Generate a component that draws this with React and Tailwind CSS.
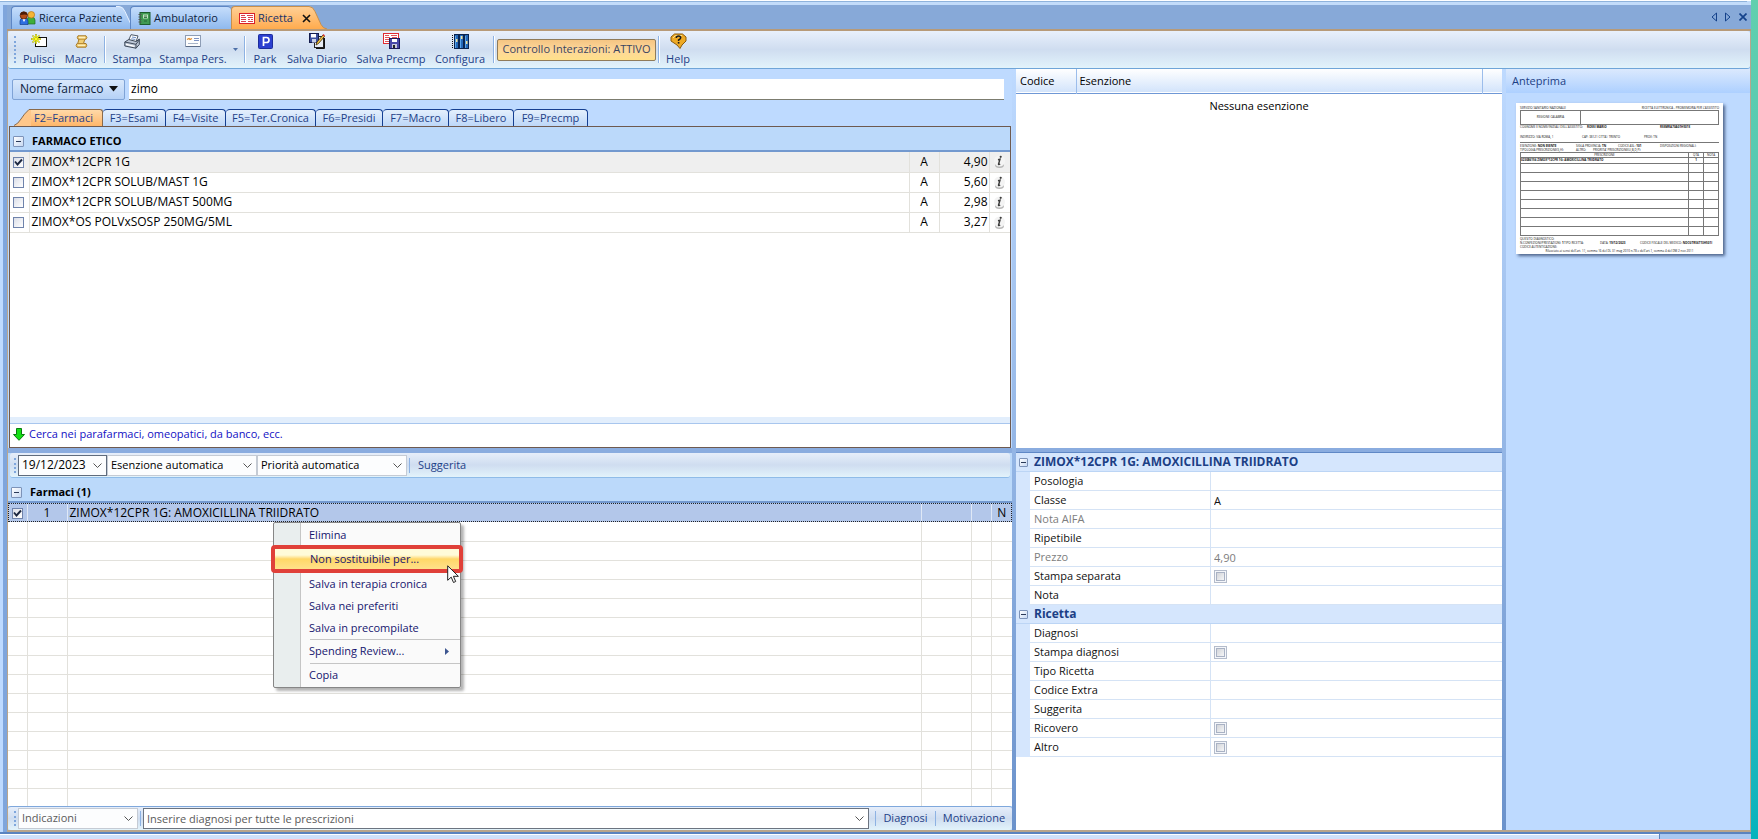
import { useState } from 'react'
import clsx from 'clsx'

const farmaci = [
  { name: 'ZIMOX*12CPR 1G', classe: 'A', price: '4,90', checked: true },
  { name: 'ZIMOX*12CPR SOLUB/MAST 1G', classe: 'A', price: '5,60' },
  { name: 'ZIMOX*12CPR SOLUB/MAST 500MG', classe: 'A', price: '2,98' },
  { name: 'ZIMOX*OS POLVxSOSP 250MG/5ML', classe: 'A', price: '3,27' }
]

const searchTabs = [
  { label: 'F3=Esami', width: 'w-[63px]' },
  { label: 'F4=Visite', width: 'w-[60px]' },
  { label: 'F5=Ter.Cronica', width: 'w-[90px]' },
  { label: 'F6=Presidi', width: 'w-[67px]' },
  { label: 'F7=Macro', width: 'w-[66px]' },
  { label: 'F8=Libero', width: 'w-[65px]' },
  { label: 'F9=Precmp', width: 'w-[74px]' }
]

const propertyGroups = [
  {
    title: 'ZIMOX*12CPR 1G: AMOXICILLINA TRIIDRATO',
    rows: [
      { label: 'Posologia' },
      { label: 'Classe', value: 'A' },
      { label: 'Nota AIFA', disabled: true },
      { label: 'Ripetibile' },
      { label: 'Prezzo', value: '4,90', disabled: true },
      { label: 'Stampa separata', check: true },
      { label: 'Nota' }
    ]
  },
  {
    title: 'Ricetta',
    rows: [
      { label: 'Diagnosi' },
      { label: 'Stampa diagnosi', check: true },
      { label: 'Tipo Ricetta' },
      { label: 'Codice Extra' },
      { label: 'Suggerita' },
      { label: 'Ricovero', check: true },
      { label: 'Altro', check: true }
    ]
  }
]

/* ---------- icons ---------- */

const UsersIcon = () => (
  <svg width="17" height="14" viewBox="0 0 17 14" className="shrink-0">
    <path d="M8 13V9q0-3 4-3t4 3v4z" fill="#3fae3a" stroke="#1d6b26" strokeWidth=".7" />
    <circle cx="12.300" cy="3.800" r="3.300" fill="#f5b535" stroke="#b87412" strokeWidth=".7" />
    <path d="M1 13.500V10q0-3 4-3t4 3v3.500z" fill="#2f6fe0" stroke="#153f91" strokeWidth=".7" />
    <circle cx="4.800" cy="4.500" r="3.700" fill="#b34d1a" stroke="#4f1d06" strokeWidth=".7" />
    <path d="M1.200 4Q1.600.6 4.800.7 8 .8 8.500 4 6 2.800 1.200 4z" fill="#4b1c08" />
    <path d="M3.500 8.200L5 11l1.500-2.800z" fill="#fff" />
  </svg>
)

const BookIcon = () => (
  <svg width="13" height="13" viewBox="0 0 13 13" className="shrink-0">
    <rect x="2" y=".5" width="10" height="12" fill="#3f9a52" stroke="#1c5c2e" />
    <rect x="5" y="2.500" width="5" height="4" fill="#bfe6c1" />
    <path d="M6 4h3M6 5.500h3M6 9h3" stroke="#1c5c2e" strokeWidth=".8" />
    <path d="M.5 2.500h3M.5 5h3M.5 7.500h3M.5 10h3" stroke="#555" />
  </svg>
)

const FormIcon = () => (
  <svg width="16" height="11" viewBox="0 0 16 11" className="shrink-0">
    <rect x=".5" y=".5" width="15" height="10" fill="#fff" stroke="#d8202a" />
    <path d="M2 2.500h4M8 2.500h6M2 4.500h5M9 4.500h5M2 6.500h5M9 6.500h2M12 6.500h2M2 8.500h5M9 8.500h5" stroke="#d9404a" />
  </svg>
)

const NewIcon = () => (
  <svg width="17" height="15" viewBox="0 0 17 15">
    <rect x="4.500" y="3.500" width="11" height="9" fill="#fff" stroke="#111" />
    <path d="M5 0v10M0 5h10M1.500 1.500l7 7M8.500 1.500l-7 7" stroke="#a8a800" strokeWidth="1.500" />
    <path d="M5 1v8M1 5h8M2 2l6 6M8 2L2 8" stroke="#ffff20" strokeWidth=".9" />
  </svg>
)

const ScrollIcon = () => (
  <svg width="13" height="13" viewBox="0 0 13 13">
    <path d="M3 .8h8q1.800 1.700 0 3.400H9.800L8.500 8.500H11q1.500 1.800 0 3.700H2Q.2 10.400 2 8.500h.7l1.300-4.300H3Q1.600 2.500 3 .8z" fill="#f1cd72" stroke="#a87a26" />
    <path d="M4 4.200h5.500M3 8.500h5.500" stroke="#b98a34" />
    <path d="M4 2.500h6M3 10.300h7" stroke="#fdeebc" strokeWidth="1.300" />
  </svg>
)

const PrinterIcon = () => (
  <svg width="17" height="15" viewBox="0 0 17 15">
    <path d="M4.500 6.500L7 .7l7 1.200-2 6z" fill="#fff" stroke="#4e5968" />
    <path d="M8 3l4 .7M7.300 4.800l4 .7" stroke="#6f8fc4" />
    <path d="M.8 8l4-2.500 7.500 2 3-2.500v5.500L12 14.200.8 12z" fill="#bcc6d6" stroke="#3f4a5a" />
    <path d="M.8 8l11.200 2.300 3.300-4.500M12 10.300v4" fill="none" stroke="#3f4a5a" />
    <path d="M2 10.300l8.500 2" stroke="#fff" strokeWidth="1.300" />
  </svg>
)

const CardIcon = () => (
  <svg width="16" height="13" viewBox="0 0 16 13">
    <rect x=".5" y=".5" width="15" height="11" fill="#fdfdfd" stroke="#8e9db5" />
    <path d="M2 4.500l2-1 1 1 2-1" fill="none" stroke="#e08b2a" strokeWidth="1.200" />
    <path d="M9 3.500h5M9 5.500h5" stroke="#7d93c4" />
    <path d="M3 8.500h10" stroke="#a8b4c8" />
    <path d="M1 11.500h14" stroke="#5b6b86" />
  </svg>
)

const ParkIcon = () => (
  <svg width="15" height="15" viewBox="0 0 15 15">
    <rect x=".5" y=".5" width="14" height="14" rx="1" fill="#2b3fd0" stroke="#1c2c9c" />
    <path d="M5.500 12V3.500h3a2.200 2.200 0 010 5h-3" fill="none" stroke="#fff" strokeWidth="1.700" />
  </svg>
)

const DiaryIcon = () => (
  <svg width="16" height="16" viewBox="0 0 16 16">
    <rect x="5.500" y="3.500" width="9" height="11" fill="#e8ecf4" stroke="#222" />
    <rect x=".5" y=".5" width="9" height="9" fill="#3b4f9e" stroke="#151d4d" />
    <rect x="2" y="1" width="5" height="3.500" fill="#fff" />
    <rect x="3" y="6" width="4" height="3.500" fill="#c9d0e6" />
    <path d="M7 12l1-3 6-7 1.500 1.500-6 7z" fill="#f3c443" stroke="#3a2a0a" strokeWidth=".8" />
    <path d="M13.500 2l1-1 1.500 1.500-1 1z" fill="#d33" />
    <path d="M7 15.500h8.500V5" fill="none" stroke="#111" />
  </svg>
)

const PrecmpIcon = () => (
  <svg width="17" height="16" viewBox="0 0 17 16">
    <rect x=".5" y=".5" width="15" height="10" fill="#fff" stroke="#e02b33" />
    <path d="M2 2.500h4M8 2.500h6M2 4.500h5M9 4.500h5M2 6.500h5M2 8.500h5" stroke="#e2525a" />
    <rect x="6.500" y="5.500" width="10" height="10" fill="#4a48a8" stroke="#1d1b5c" />
    <rect x="9" y="6" width="5" height="3" fill="#fff" />
    <rect x="9" y="11" width="5" height="4" fill="#c9c9de" />
    <rect x="10" y="12" width="2" height="3" fill="#222" />
  </svg>
)

const BindersIcon = () => (
  <svg width="17" height="15" viewBox="0 0 17 15">
    <path d="M.5 1v14" stroke="#111" strokeDasharray="1 1" />
    {[2, 7, 12].map((x) => (
      <g key={x}>
        <rect x={x + 0.5} y=".5" width="4" height="14" fill="#2468b8" stroke="#0a2450" />
        <path d={`M${x + 1.500} 2v12`} stroke="#59a4ea" />
      </g>
    ))}
    <path d="M4 5h1.500v3H4zM9 2h1.500v3H9zM14 7h1.500v3H14z" fill="#f2e39c" />
  </svg>
)

const HelpIcon = () => (
  <svg width="17" height="16" viewBox="0 0 17 16">
    <path d="M4.500 1h8l3.500 3v4l-4 4-2 3.500L7 12 1 8V4z" fill="#eda925" stroke="#8a5a0c" />
    <path d="M3 5l2.500-2.500H12" fill="none" stroke="#fbe08a" />
    <path d="M6.300 5q0-2 2.200-2t2.200 1.800Q10.700 6 8.600 7v1" fill="none" stroke="#1a1a1a" strokeWidth="1.500" />
    <rect x="7.800" y="9" width="1.600" height="1.600" fill="#1a1a1a" />
  </svg>
)

const InfoIcon = () => (
  <svg width="13" height="15" viewBox="0 0 13 15">
    <ellipse cx="6.500" cy="11" rx="4.500" ry="3" fill="#b5b5b5" />
    <circle cx="6.500" cy="7" r="5.500" fill="#f4f4f4" />
    <path d="M5 5.700l2-.5-1.500 5q0 .8 1.700-.2" fill="none" stroke="#3c3c3c" strokeWidth="1.400" />
    <circle cx="7.700" cy="2.800" r="1.100" fill="#3c3c3c" />
  </svg>
)

const ArrowDownIcon = () => (
  <svg width="12" height="13" viewBox="0 0 12 13">
    <path d="M3.500.5h5v6h3L6 12.300.5 6.500h3z" fill="#14e014" stroke="#0a7a12" />
  </svg>
)

const Chevron = ({ className }) => (
  <svg width="9" height="5" viewBox="0 0 9 5" className={className}>
    <path d="M.5.5l4 4 4-4" fill="none" stroke="#555" />
  </svg>
)

const CursorIcon = () => (
  <svg width="13" height="19" viewBox="0 0 13 19">
    <path d="M.7.8v14.500l3.500-3.200 2.300 5.400 2.200-1-2.300-5.200h5z" fill="#fff" stroke="#222" />
  </svg>
)

/* ---------- small parts ---------- */

const Check = ({ label, defaultChecked }) => (
  <span className="inline-grid size-[11px] place-items-center align-middle">
    <input
      type="checkbox"
      aria-label={label}
      defaultChecked={defaultChecked}
      className="peer size-[11px] appearance-none border border-[#6f83ab] bg-linear-to-br from-[#dcdfe8] to-white [grid-area:1/1]"
    />
    <svg
      width="9"
      height="9"
      viewBox="0 0 9 9"
      className="pointer-events-none invisible peer-checked:visible [grid-area:1/1]"
    >
      <path d="M1 3.500l2.500 3L8 1.500" fill="none" stroke="#1c2740" strokeWidth="1.900" />
    </svg>
  </span>
)

const GreyCheck = ({ id }) => (
  <input
    id={id}
    type="checkbox"
    className="block size-[13px] appearance-none border border-[#b4bccb] bg-linear-to-br from-[#c9ccd2] to-white shadow-[inset_0_0_0_1px_#f4f6fa,inset_0_0_0_2px_#a9b2c4]"
  />
)

const Expander = ({ small }) => (
  <button
    aria-label="Comprimi"
    className={clsx(
      'grid place-items-center rounded-[1px] border border-[#7d93b8] bg-linear-to-br from-white to-[#c8d9f2]',
      small ? 'size-[9px]' : 'size-[11px]'
    )}
  >
    <span className="h-px w-[5px] bg-[#2b3a58]"></span>
  </button>
)

const Separator = () => <span className="h-[27px] w-[2px] shrink-0 border-l border-[#8db2e3] bg-white"></span>

const Grip = ({ tall }) => (
  <span
    className={clsx(
      'w-0 shrink-0 border-l-2 border-dotted border-[#7fa6dc]',
      tall ? 'h-[27px]' : 'h-[15px]'
    )}
  ></span>
)

const ToolButton = ({ icon, label, width }) => (
  <button className={clsx('flex h-[33px] shrink-0 flex-col items-center justify-between', width)}>
    <span className="grid h-4 place-items-center">{icon}</span>
    <span className="text-[11px] leading-[14px] whitespace-nowrap text-[#1e3f87]">{label}</span>
  </button>
)

const Select = ({ label, value, className }) => (
  <span className={clsx('grid h-[21px] shrink-0 items-center border bg-[#fcfdfe]', className)}>
    <select aria-label={label} className="h-full w-full appearance-none pl-[3px] outline-none [grid-area:1/1]">
      <option>{value}</option>
    </select>
    <Chevron className="pointer-events-none mr-1 justify-self-end [grid-area:1/1]" />
  </span>
)

const PageTab = ({ icon, label, active, slant, className }) => (
  <div className={clsx('flex h-[23px]', className)}>
    <button
      className={clsx(
        'relative z-10 flex min-w-0 flex-1 items-center gap-[3px] rounded-tl border-t border-l pl-[7px] text-[11px] whitespace-nowrap',
        active
          ? 'border-[#c78f4c] bg-linear-to-b from-[#ffcf94] to-[#ffab4d] text-[#15326b]'
          : 'border-[#5d86c4] bg-linear-to-b from-[#c5ddfb] to-[#8fb9ee] text-[#0d1d3d]',
        !slant && 'rounded-tr'
      )}
    >
      {icon}
      {label}
      {active && (
        <svg width="9" height="9" viewBox="0 0 9 9" className="ml-[6px] shrink-0">
          <path d="M1 1l7 7M8 1L1 8" stroke="#111" strokeWidth="1.600" />
        </svg>
      )}
    </button>
    {slant && (
      <svg width="21" height="23" viewBox="0 0 21 23" className="shrink-0">
        <defs>
          <linearGradient id={active ? 'slantOn' : 'slantOff'} x2="0" y2="1">
            <stop stopColor={active ? '#ffcf94' : '#c5ddfb'} />
            <stop offset="1" stopColor={active ? '#ffab4d' : '#8fb9ee'} />
          </linearGradient>
        </defs>
        <path
          d="M0 .5h3q4 0 6 5l6 13q2 4 6 4.500H0z"
          fill={active ? 'url(#slantOn)' : 'url(#slantOff)'}
        />
        <path
          d="M0 .5h3q4 0 6 5l6 13q2 4 6 4.500"
          fill="none"
          stroke={active ? '#c78f4c' : '#e6f1ff'}
        />
      </svg>
    )}
  </div>
)

/* ---------- page parts ---------- */

const Toolbar = () => (
  <div className="flex h-[38px] shrink-0 items-center rounded-[3px] border-b border-[#6fa5d8] bg-linear-to-b from-[#e9f0fb] via-[#cfddf0] to-[#e2f3fb] pl-[6px]">
    <Grip tall />
    <ToolButton width="ml-[2px] w-[42px]" icon={<NewIcon />} label="Pulisci" />
    <ToolButton width="w-[42px]" icon={<ScrollIcon />} label="Macro" />
    <span className="w-[2px]"></span>
    <Separator />
    <ToolButton width="ml-[2px] w-[48px]" icon={<PrinterIcon />} label="Stampa" />
    <ToolButton width="w-[74px]" icon={<CardIcon />} label="Stampa Pers." />
    <svg width="5" height="3" viewBox="0 0 5 3" className="mr-[6px] ml-[3px]">
      <path d="M0 0h5L2.500 3z" fill="#4d6fa8" />
    </svg>
    <Separator />
    <ToolButton width="ml-[3px] w-[32px]" icon={<ParkIcon />} label="Park" />
    <ToolButton width="w-[72px]" icon={<DiaryIcon />} label="Salva Diario" />
    <ToolButton width="w-[76px]" icon={<PrecmpIcon />} label="Salva Precmp" />
    <ToolButton width="w-[62px]" icon={<BindersIcon />} label="Configura" />
    <span className="w-[2px]"></span>
    <Separator />
    <button className="mx-[2px] h-[22px] w-[159px] shrink-0 rounded-[2px] border border-[#8f7b5a] bg-linear-to-b from-[#f5c583] via-[#fdd79a] to-[#ffe08a] text-[11px] whitespace-nowrap text-[#3b4560]">
      Controllo Interazioni: ATTIVO
    </button>
    <Separator />
    <ToolButton width="w-[36px]" icon={<HelpIcon />} label="Help" />
  </div>
)

const DrugSearch = () => (
  <>
    <div className="flex h-[40px] shrink-0 items-center pl-1">
      <button className="flex h-[21px] w-[113px] items-center justify-between rounded-[2px] border border-[#7fa3d6] bg-linear-to-b from-[#d9e8fb] to-[#b5d1f6] pr-[6px] pl-[7px] text-xs text-[#0d1d3d]">
        Nome farmaco
        <svg width="9" height="6" viewBox="0 0 9 6">
          <path d="M0 0h9L4.500 5.500z" fill="#111" />
        </svg>
      </button>
      <input
        aria-label="Nome farmaco"
        defaultValue="zimo"
        className="mr-2 ml-1 h-[21px] min-w-0 flex-1 border-b border-[#7c7c6f] bg-white pl-[2px] text-xs outline-none"
      />
    </div>
    <div className="flex h-[17px] shrink-0 pl-[6px] text-[11px] text-[#1e3f87]">
      <svg width="17" height="17" viewBox="0 0 17 17" className="shrink-0">
        <path d="M0 17Q4 15 7 10T15 .5h2V17z" fill="#ffc78a" />
        <path d="M0 16.500Q4 15 7 10T15 .5h2" fill="none" stroke="#8a6a4a" />
      </svg>
      <button className="w-[72px] rounded-tr-[3px] border-t border-r border-[#8a6a4a] bg-linear-to-b from-[#ffd9a8] to-[#ffb668] pr-[6px]">
        F2=Farmaci
      </button>
      {searchTabs.map(({ label, width }) => (
        <button
          key={label}
          className={clsx(
            'rounded-t-[4px] border-t border-r border-[#153f91] bg-linear-to-b from-[#e4effc] to-[#bdd7f8] whitespace-nowrap',
            width
          )}
        >
          {label}
        </button>
      ))}
    </div>
    <section className="mx-[1px] flex min-h-0 flex-1 flex-col border border-[#6e5a50] bg-white">
      <div className="flex h-[25px] shrink-0 items-center gap-2 border-b-2 border-[#7399cf] bg-[#bbd9fa] pt-[6px] pl-[3px]">
        <Expander />
        <h2 className="text-[11px] font-bold">FARMACO ETICO</h2>
      </div>
      <div className="min-h-0 flex-1">
        <table className="w-full table-fixed border-collapse text-xs">
          <colgroup>
            <col className="w-[19px]" />
            <col />
            <col className="w-[30px]" />
            <col className="w-[50px]" />
            <col className="w-[21px]" />
          </colgroup>
          <tbody>
            {farmaci.map((f) => (
              <tr key={f.name} className={clsx('h-5 border-b border-[#e2e1dc]', f.checked && 'bg-[#efefef]')}>
                <td className="pl-[3px] leading-none">
                  <Check label={f.name} defaultChecked={f.checked} />
                </td>
                <td className="border-l border-[#e2e1dc] pl-[2px] leading-[18px]">{f.name}</td>
                <td className="border-l border-[#e2e1dc] text-center">{f.classe}</td>
                <td className="border-l border-[#e2e1dc] pr-[1px] text-right">{f.price}</td>
                <td className="border-l border-[#e2e1dc] pl-[3px]">
                  <InfoIcon />
                </td>
              </tr>
            ))}
          </tbody>
        </table>
      </div>
      <div className="h-[7px] shrink-0 border-b border-[#a8c6ee] bg-[#e2eefc]"></div>
      <div className="flex h-[23px] shrink-0 items-center gap-1 pb-[2px] pl-[3px]">
        <ArrowDownIcon />
        <a href="#parafarmaci" className="text-[11px] text-[#1210c4]">
          Cerca nei parafarmaci, omeopatici, da banco, ecc.
        </a>
      </div>
    </section>
  </>
)

const menuItem = 'flex shrink-0 items-center pl-[35px] text-left'

const ContextMenu = () => (
  <div className="absolute top-[44px] left-[265px] flex h-[166px] w-[188px] flex-col rounded-[2px] border border-[#868686] bg-[linear-gradient(to_right,#e9eeee_26px,#c5c5c5_26px,#c5c5c5_27px,#fafafa_27px)] pt-[2px] text-[11px] text-[#15156e] shadow-[3px_3px_3px_rgba(0,0,0,0.3)]">
    <button className={clsx(menuItem, 'h-[20px]')}>Elimina</button>
    <button
      className={clsx(
        menuItem,
        '-mx-[3px] h-[28px] rounded-[4px] border-4 border-[#e04039] bg-linear-to-b from-[#fffbd9] from-30% via-[#ffd767] via-50% to-[#ffe08a] pl-[34px]'
      )}
    >
      Non sostituibile per...
    </button>
    <button className={clsx(menuItem, 'h-[22px]')}>Salva in terapia cronica</button>
    <button className={clsx(menuItem, 'h-[22px]')}>Salva nei preferiti</button>
    <button className={clsx(menuItem, 'h-[22px]')}>Salva in precompilate</button>
    <hr className="ml-[36px] border-[#c5c5c5]" />
    <button className={clsx(menuItem, 'h-[23px] justify-between pr-[11px]')}>
      Spending Review...
      <svg width="4" height="7" viewBox="0 0 4 7">
        <path d="M0 0l4 3.500L0 7z" fill="#3d5690" />
      </svg>
    </button>
    <hr className="ml-[36px] border-[#c5c5c5]" />
    <button className={clsx(menuItem, 'h-[23px]')}>Copia</button>
    <span className="absolute top-[42px] right-0">
      <CursorIcon />
    </span>
  </div>
)

const Prescriptions = () => (
  <>
    <div className="mx-[2px] flex h-[25px] shrink-0 items-center rounded-[3px] border-b border-[#8fbce8] bg-linear-to-b from-[#e6eefa] via-[#cfddf0] to-[#e2f3fb] pl-1 text-[11px]">
      <Grip />
      <Select label="Data" value="19/12/2023" className="ml-[2px] w-[89px] border-[#5f6b7c] text-xs" />
      <Select label="Esenzione" value="Esenzione automatica" className="w-[150px] border-[#c5cbd4]" />
      <Select label="Priorità" value="Priorità automatica" className="w-[150px] border-[#c5cbd4]" />
      <span className="mx-[2px] h-[15px] border-l border-[#8db2e3]"></span>
      <button className="px-[6px] text-[#1e3f87]">Suggerita</button>
    </div>
    <section className="relative min-h-0 flex-1 overflow-clip bg-white">
      <div className="flex h-[25px] items-center gap-2 border-b-2 border-[#7399cf] bg-[#bbd9fa] pt-[6px] pl-[3px]">
        <Expander />
        <h2 className="text-[11px] font-bold">Farmaci (1)</h2>
      </div>
      <table className="w-full table-fixed border-collapse text-xs">
        <colgroup>
          <col className="w-[19px]" />
          <col className="w-[40px]" />
          <col />
          <col className="w-[50px]" />
          <col className="w-[20px]" />
          <col className="w-[21px]" />
        </colgroup>
        <tbody>
          <tr className="h-[19px] bg-[#b3c7ea] outline outline-dotted -outline-offset-1 outline-[#222]">
            <td className="pl-1 leading-none">
              <Check label="ZIMOX*12CPR 1G: AMOXICILLINA TRIIDRATO" defaultChecked />
            </td>
            <td className="border-l border-[#dfe8f6] text-center leading-[18px]">1</td>
            <td className="border-l border-[#dfe8f6] pl-[2px]">ZIMOX*12CPR 1G: AMOXICILLINA TRIIDRATO</td>
            <td className="border-l border-[#dfe8f6]"></td>
            <td className="border-l border-[#dfe8f6]"></td>
            <td className="border-l border-[#dfe8f6] text-center">N</td>
          </tr>
          {Array.from({ length: 15 }, (_, i) => (
            <tr key={i} className="h-[19px] border-b border-[#e2e1dc]">
              <td></td>
              <td className="border-l border-[#e2e1dc]"></td>
              <td className="border-l border-[#e2e1dc]"></td>
              <td className="border-l border-[#e2e1dc]"></td>
              <td className="border-l border-[#e2e1dc]"></td>
              <td className="border-l border-[#e2e1dc]"></td>
            </tr>
          ))}
        </tbody>
      </table>
      <ContextMenu />
    </section>
    <div className="flex h-[24px] shrink-0 items-center rounded-[3px] border-t border-[#7fa8dc] bg-linear-to-b from-[#e6eefa] via-[#cfddf0] to-[#e2f3fb] pl-[6px] text-[11px] text-[#1e3f87]">
      <Grip />
      <Select label="Indicazioni" value="Indicazioni" className="ml-[2px] w-[120px] border-[#c5cbd4] text-[#5a5a5a]" />
      <span className="mx-[2px] h-[15px] border-l border-[#8db2e3]"></span>
      <span className="grid h-[21px] min-w-0 flex-1 items-center border border-[#6c7480] bg-white">
        <input
          aria-label="Diagnosi"
          placeholder="Inserire diagnosi per tutte le prescrizioni"
          className="h-full w-full pl-[3px] outline-none [grid-area:1/1] placeholder:text-[#5a5a5a]"
        />
        <Chevron className="pointer-events-none mr-1 justify-self-end [grid-area:1/1]" />
      </span>
      <span className="ml-[6px] h-[15px] border-l border-[#8db2e3]"></span>
      <button className="w-[59px]">Diagnosi</button>
      <span className="h-[15px] border-l border-[#8db2e3]"></span>
      <button className="w-[76px]">Motivazione</button>
    </div>
  </>
)

const Exemptions = () => (
  <section className="flex min-h-0 flex-1 flex-col bg-white text-[11px]">
    <table className="w-full table-fixed border-collapse">
      <thead>
        <tr className="h-[24px] border-b border-[#6f98d6] bg-linear-to-b from-white to-[#d3e4fb] text-left">
          <th className="w-[60px] pl-1 font-normal">Codice</th>
          <th className="border-l border-[#9cbdeb] pl-[3px] font-normal">Esenzione</th>
          <th className="w-[20px] border-l border-[#9cbdeb]"></th>
        </tr>
      </thead>
      <tbody>
        <tr>
          <td colSpan="3" className="h-[26px] text-center">
            Nessuna esenzione
          </td>
        </tr>
      </tbody>
    </table>
  </section>
)

const PropertyGroup = ({ title, rows }) => (
  <div>
    <div className="flex h-[19px] items-center border-b border-[#bcd5f5] bg-[#d5e6fd] pl-[3px]">
      <Expander small />
      <h3 className="ml-[6px] text-xs font-bold text-[#1c3f85]">{title}</h3>
    </div>
    {rows.map((row) => {
      const id = 'prop-' + row.label.toLowerCase().replace(' ', '-')
      return (
        <div
          key={row.label}
          className={clsx('flex h-[19px] items-stretch', row.disabled ? 'text-[#7d7d7d]' : 'text-[#111]')}
        >
          <span className="w-[14px] shrink-0 bg-[#d5e6fd]"></span>
          <label
            htmlFor={id}
            className="w-[181px] shrink-0 border-r border-b border-[#d5e3f5] pl-1 leading-[18px]"
          >
            {row.label}
          </label>
          <span className="flex min-w-0 flex-1 items-center border-b border-[#d5e3f5] pl-[3px]">
            {row.check ? (
              <GreyCheck id={id} />
            ) : (
              <input
                id={id}
                defaultValue={row.value}
                disabled={row.disabled}
                className="h-full w-full bg-transparent outline-none"
              />
            )}
          </span>
        </div>
      )
    })}
  </div>
)

const Preview = () => (
  <aside className="w-[244px] shrink-0 bg-[#bedaff]">
    <h2 className="flex h-[24px] items-center bg-linear-to-b from-[#dbe9fd] to-[#add0ff] pl-[6px] text-[11px] text-[#1c3f85]">
      Anteprima
    </h2>
    <article className="mt-[10px] ml-[10px] flex h-[151px] w-[207px] flex-col bg-white px-1 pt-[3px] text-[3px] leading-[4px] whitespace-nowrap text-[#111] shadow-[2px_2px_3px_rgba(30,50,90,0.7)]">
      <p className="flex justify-between">
        <span>SERVIZIO SANITARIO NAZIONALE</span>
        <span>RICETTA ELETTRONICA - PROMEMORIA PER L'ASSISTITO</span>
      </p>
      <div className="flex h-[15px] border border-[#777]">
        <span className="w-[60px] border-r border-[#777] pt-1 text-center">REGIONE CALABRIA</span>
      </div>
      <p className="flex">
        <span className="w-[67px]">COGNOME E NOME/INIZIALI DELL'ASSISTITO:</span>
        <b className="w-[73px]">ROSSI MARIO</b>
        <b>RSSMRA70A01H501S</b>
      </p>
      <p className="mt-[6px] flex">
        <span className="w-[62px]">INDIRIZZO: VIA ROMA, 1</span>
        <span className="w-[62px]">CAP: 38121 CITTA': TRENTO</span>
        <span>PROV: TN</span>
      </p>
      <p className="mt-[3px] flex border-t border-[#777] pt-px">
        <span className="w-[56px]">ESENZIONE: <b>NON ESENTE</b></span>
        <span className="w-[42px]">SIGLA PROVINCIA: <b>TN</b></span>
        <span className="w-[42px]">CODICE ASL: <b>101</b></span>
        <span>DISPOSIZIONI REGIONALI:</span>
      </p>
      <p className="flex">
        <span className="w-[56px]">TIPOLOGIA PRESCRIZIONE(S,H):</span>
        <span className="w-[17px]">ALTRO:</span>
        <span>PRIORITA' PRESCRIZIONE(U,B,D,P):</span>
      </p>
      <table className="w-full table-fixed border-collapse border border-[#777]">
        <thead>
          <tr className="h-[4px] border-b border-[#777]">
            <th className="p-0 font-normal">PRESCRIZIONE</th>
            <th className="w-[15px] border-l border-[#777] p-0 font-normal">QTA</th>
            <th className="w-[15px] border-l border-[#777] p-0 font-normal">NOTA</th>
          </tr>
        </thead>
        <tbody>
          {Array.from({ length: 9 }, (_, i) => (
            <tr key={i} className={clsx('border-b border-[#777] align-top font-bold', i ? 'h-[9px]' : 'h-[6px]')}>
              <td className="p-0">{i === 0 && '023086156 ZIMOX*12CPR 1G: AMOXICILLINA TRIIDRATO'}</td>
              <td className="border-l border-[#777] p-0 text-center">{i === 0 && '1'}</td>
              <td className="border-l border-[#777] p-0"></td>
            </tr>
          ))}
        </tbody>
      </table>
      <p className="mt-px">QUESITO DIAGNOSTICO:</p>
      <p className="flex">
        <span className="w-[44px]">N.CONFEZIONI/PRESTAZIONI: <b>1</b></span>
        <span className="w-[36px]">TIPO RICETTA:</span>
        <span className="w-[40px]">DATA: <b>19/12/2023</b></span>
        <span>CODICE FISCALE DEL MEDICO: <b>NDCGTR56T13H501I</b></span>
      </p>
      <p>CODICE AUTENTICAZIONE:</p>
      <p className="text-center">Rilasciato ai sensi dell'art. 11, comma 16 del DL 31 mag 2010 n.78 e dell'art.1, comma 4 del DM 2 nov 2011</p>
    </article>
  </aside>
)

const App = () => {
  const [groups] = useState(propertyGroups)

  return (
    <div className="flex h-screen overflow-hidden bg-linear-to-b from-[#62cfae] to-[#04b3bd] font-['Open_Sans','Noto_Sans',sans-serif]">
      <div className="flex min-w-0 flex-1 flex-col">
        <div className="h-[5px] shrink-0 border-t border-white bg-[#c3dcfa]">
          <div className="mr-1 h-px bg-[#8fb3dc]"></div>
        </div>
        <div className="flex min-h-0 flex-1">
          <div className="w-[7px] shrink-0 border-r-4 border-[#7fa5dc] bg-[#bedaff]"></div>
          <main className="flex min-w-0 flex-1 flex-col">
            <nav className="flex h-[26px] shrink-0 items-end justify-between border-b-2 border-[#b79a78] bg-[#87a9d8] pl-1">
              <div className="flex">
                <PageTab slant className="w-[126px]" icon={<UsersIcon />} label="Ricerca Paziente" />
                <PageTab className="-ml-[7px] w-[101px] pl-0" icon={<BookIcon />} label="Ambulatorio" />
                <PageTab active slant className="w-[96px]" icon={<FormIcon />} label="Ricetta" />
              </div>
              <div className="flex items-center gap-2 self-center pr-1">
                <svg width="6" height="10" viewBox="0 0 6 10">
                  <path d="M5.500 1v8L1 5z" fill="none" stroke="#15428b" />
                </svg>
                <svg width="6" height="10" viewBox="0 0 6 10">
                  <path d="M.5 1v8L5 5z" fill="none" stroke="#15428b" />
                </svg>
                <svg width="8" height="8" viewBox="0 0 8 8">
                  <path d="M.5.5l7 7M7.500.5l-7 7" stroke="#15428b" strokeWidth="1.700" />
                </svg>
              </div>
            </nav>
            <div className="flex min-h-0 flex-1 flex-col border-r border-b-2 border-l border-[#b9a58c] bg-[#bedaff]">
              <Toolbar />
              <div className="flex min-h-0 flex-1 bg-linear-to-b from-[#bedaff] to-[#6b92cb]">
                <div className="flex min-w-0 flex-1 flex-col">
                  <div className="flex h-[379px] shrink-0 flex-col bg-[#bedaff]">
                    <DrugSearch />
                  </div>
                  <div className="h-[5px] shrink-0 bg-[#8aacdf]"></div>
                  <div className="flex min-h-0 flex-1 flex-col bg-[#bbd9fa]">
                    <Prescriptions />
                  </div>
                </div>
                <div className="mx-1 flex w-[486px] shrink-0 flex-col">
                  <div className="flex h-[379px] shrink-0 flex-col">
                    <Exemptions />
                  </div>
                  <div className="h-[5px] shrink-0 border-b border-[#5f88c6] bg-[#8aacdf]"></div>
                  <section className="min-h-0 flex-1 bg-white text-[11px]">
                    {groups.map((group) => (
                      <PropertyGroup key={group.title} {...group} />
                    ))}
                  </section>
                </div>
                <Preview />
              </div>
            </div>
          </main>
        </div>
        <footer className="flex h-[7px] shrink-0 border-t-2 border-[#5b83bf] bg-[#cfe1fb]">
          <span className="flex-1 border-t border-white"></span>
          <span className="w-[92px] border-l border-[#5b83bf] bg-[#a9c8f2]"></span>
        </footer>
      </div>
      <div className="w-[7px] shrink-0"></div>
    </div>
  )
}

export default App
